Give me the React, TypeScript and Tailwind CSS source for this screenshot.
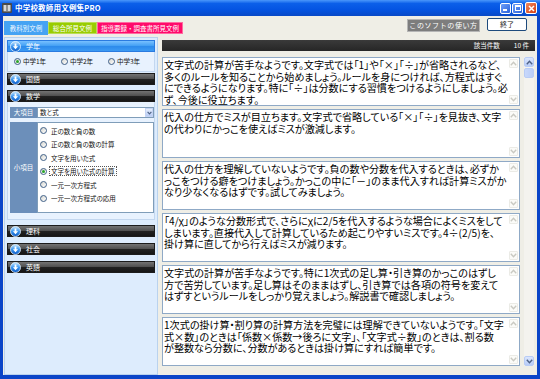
import React from "react";

const boxes: string[][] = [
  [
    "文字式の計算が苦手なようです。文字式では「1」や「×」「÷」が省略されるなど、",
    "多くのルールを知ることから始めましょう。ルールを身につければ、方程式はすぐ",
    "にできるようになります。特に「÷」は分数にする習慣をつけるようにしましょう。必",
    "ず、今後に役立ちます。",
  ],
  [
    "代入の仕方でミスが目立ちます。文字式で省略している「×」「÷」を見抜き、文字",
    "の代わりにかっこを使えばミスが激減します。",
  ],
  [
    "代入の仕方を理解していないようです。負の数や分数を代入するときは、必ずか",
    "っこをつける癖をつけましょう。かっこの中に「－」のまま代入すれば計算ミスがか",
    "なり少なくなるはずです。試してみましょう。",
  ],
  [
    "「4/χ」のような分数形式で、さらにχに2/5を代入するような場合によくミスをして",
    "しまいます。直接代入して計算しているため起こりやすいミスです。4÷(2/5)を、",
    "掛け算に直してから行えばミスが減ります。",
  ],
  [
    "文字式の計算が苦手なようです。特に1次式の足し算・引き算のかっこのはずし",
    "方で苦労しています。足し算はそのままはずし、引き算では各項の符号を変えて",
    "はずすというルールをしっかり覚えましょう。解説書で確認しましょう。",
  ],
  [
    "1次式の掛け算・割り算の計算方法を完璧には理解できていないようです。「文字",
    "式×数」のときは「係数×係数→後ろに文字」、「文字式÷数」のときは、割る数",
    "が整数なら分数に、分数があるときは掛け算にすれば簡単です。",
  ],
];

const subItems = [
  "正の数と負の数",
  "正の数と負の数の計算",
  "文字を用いた式",
  "文字を用いた式の計算",
  "一元一次方程式",
  "一元一次方程式の応用",
];

function Chevron({ up, color }: { up?: boolean; color: string }) {
  return (
    <svg width="7" height="5" viewBox="0 0 7 5">
      <path
        d={up ? "M0.8 4.2L3.5 1.3 6.2 4.2" : "M0.8 0.8L3.5 3.7 6.2 0.8"}
        stroke={color}
        strokeWidth="1.4"
        fill="none"
      />
    </svg>
  );
}

function DownIcon() {
  return (
    <svg width="11" height="11" viewBox="0 0 11 11" className="shrink-0">
      <defs>
        <linearGradient id="hg" x1="0" y1="0" x2="0" y2="1">
          <stop offset="0" stopColor="#c4e6ff" />
          <stop offset="0.5" stopColor="#3a95f0" />
          <stop offset="1" stopColor="#0b58c4" />
        </linearGradient>
      </defs>
      <circle cx="5.5" cy="5.5" r="5" fill="url(#hg)" stroke="#eaf5ff" strokeWidth="0.8" />
      <path d="M4.6 2.5h1.8v2.8h1.7L5.5 8.3 2.9 5.3h1.7z" fill="#fff" />
    </svg>
  );
}

function Header({ label, active }: { label: string; active?: boolean }) {
  return (
    <div
      className={`h-[12px] flex items-center gap-[5px] pl-[2px] border ${
        active
          ? "bg-[linear-gradient(#78c0ff,#43a0f4_48%,#2c8aeb_52%,#3c9af2)] border-[#2a7be0]"
          : "bg-[linear-gradient(#737373,#515151_46%,#222_52%,#161616)] border-[#1c1c1c]"
      }`}
    >
      <DownIcon />
      <span className="text-[7px] leading-none text-white">{label}</span>
    </div>
  );
}

function Radio({ checked }: { checked?: boolean }) {
  return (
    <span className="w-[7px] h-[7px] rounded-full border border-[#3f5f86] bg-[linear-gradient(135deg,#d6d6cf,#ffffff)] flex items-center justify-center shrink-0">
      {checked && <span className="w-[3px] h-[3px] rounded-full bg-[#2aa52a]" />}
    </span>
  );
}

function TitleBar() {
  return (
    <div className="h-[16px] shrink-0 flex items-center pl-[2px] pr-[3px] bg-[linear-gradient(#4a97fb,#0b5fe9_22%,#0454e2_60%,#0849c6)]">
      <svg width="10" height="10" viewBox="0 0 10 10" className="shrink-0">
        <rect x="0" y="0" width="10" height="10" rx="1" fill="#4a4a4a" />
        <rect x="1.5" y="2" width="3" height="6" fill="#d8d8d8" />
        <rect x="5.5" y="2" width="3" height="6" fill="#d8d8d8" />
        <rect x="1.5" y="8.2" width="7" height="0.8" fill="#888" />
      </svg>
      <span className="ml-[3px] text-[7.5px] font-bold leading-none text-white tracking-[0.2px]">
        中学校教師用文例集PRO
      </span>
      <div className="flex-1" />
      <div className="w-[11px] h-[11px] rounded-[2px] border border-white bg-[linear-gradient(135deg,#6ea0f8,#2a62dc)] flex items-end pl-[2px] pb-[2px]">
        <span className="w-[4px] h-[2px] bg-white" />
      </div>
      <div className="ml-[1px] w-[11px] h-[11px] rounded-[2px] border border-white bg-[linear-gradient(135deg,#6ea0f8,#2a62dc)] flex items-center justify-center">
        <span className="w-[6px] h-[6px] border border-white border-t-2" />
      </div>
      <div className="ml-[2px] w-[12px] h-[12px] rounded-[2px] border border-white bg-[linear-gradient(135deg,#f08a60,#d33c10)] flex items-center justify-center">
        <svg width="7" height="7" viewBox="0 0 7 7">
          <path d="M1 1L6 6M6 1L1 6" stroke="#fff" strokeWidth="1.5" />
        </svg>
      </div>
    </div>
  );
}

function Toolbar() {
  return (
    <div className="h-[21px] shrink-0 flex items-start">
      <div className="mt-[5px] ml-[1px] flex items-start">
        <div className="w-[44px] h-[14px] bg-[#45a3f3] flex items-center justify-center text-[6.5px] leading-none text-[#eef8ff]">
          教科別文例
        </div>
        <div className="mt-[1px] w-[49px] h-[12px] bg-[#99cc00] border border-[#b9dd55] flex items-center justify-center text-[6.5px] leading-none text-white">
          総合所見文例
        </div>
        <div className="mt-[1px] w-[86px] h-[12px] bg-[#ff0a6a] border border-[#ff6aa0] flex items-center justify-center text-[6.5px] leading-none text-white">
          指導要録・調査書所見文例
        </div>
      </div>
      <div className="flex-1" />
      <div className="mt-[3px] w-[73px] h-[13px] bg-[#7d7d7d] border border-[#b5b5b5] flex items-center justify-center text-[7px] leading-none text-white tracking-[0.6px]">
        このソフトの使い方
      </div>
      <div className="mt-[2px] ml-[7px] mr-[10px] w-[40px] h-[13px] bg-white rounded-[2px] border border-[#1d4a7c] flex items-center justify-center text-[7px] leading-none text-[#222]">
        終了
      </div>
    </div>
  );
}

function LeftPanel() {
  return (
    <div className="w-[154px] ml-[1px] bg-[#ddecfd] border border-[#b9d2ee] px-[2px] pt-[2px] flex flex-col">
      <Header label="学年" active />
      <div className="h-[20px] flex items-center bg-[#e8f2fe] border-x border-b border-[#c3d7ef]">
        {["中学1年", "中学2年", "中学3年"].map((t, i) => (
          <div key={t} className="w-[47px] pl-[6px] flex items-center gap-[2px]">
            <Radio checked={i === 0} />
            <span className="text-[6.5px] leading-none text-[#111]">{t}</span>
          </div>
        ))}
      </div>
      <div className="mt-[1px]">
        <Header label="国語" />
      </div>
      <div className="mt-[5px]">
        <Header label="数学" />
      </div>
      <div className="bg-[#e8f2fe] border-x border-b border-[#c3d7ef] pl-[2px] pt-[5px] pb-[6px]">
        <div className="h-[11px] flex">
          <div className="w-[27px] bg-[#6c8fba] flex items-center justify-center text-[6.5px] leading-none text-white">
            大項目
          </div>
          <div className="flex-1 bg-white border border-[#7f9db9] flex items-center pl-[2px]">
            <span className="flex-1 text-[6.5px] leading-none text-[#111] [font-feature-settings:'palt']">数と式</span>
            <div className="w-[8px] h-[9px] bg-[linear-gradient(#e6eefc,#b9cdf5)] border border-[#c5d4f4] flex items-center justify-center">
              <svg width="5" height="4" viewBox="0 0 5 4">
                <path d="M0.6 0.8L2.5 2.8 4.4 0.8" stroke="#4d6185" strokeWidth="1.2" fill="none" />
              </svg>
            </div>
          </div>
        </div>
        <div className="mt-[4px] h-[91px] flex">
          <div className="w-[27px] bg-[#6c8fba] flex items-center justify-center text-[6.5px] leading-none text-white">
            小項目
          </div>
          <div className="flex-1 bg-white border border-[#7f9db9] pl-[2px] pt-[1px] flex flex-col">
            {subItems.map((t, i) => (
              <div key={t} className="h-[13.5px] flex items-center gap-[2px]">
                <Radio checked={i === 3} />
                <span
                  className={`text-[6.5px] leading-[8px] px-[1px] text-[#111] [font-feature-settings:'palt'] ${
                    i === 3 ? "border border-dotted border-[#555]" : "border border-transparent"
                  }`}
                >
                  {t}
                </span>
              </div>
            ))}
          </div>
        </div>
      </div>
      <div className="mt-[5px]">
        <Header label="理科" />
      </div>
      <div className="mt-[6px]">
        <Header label="社会" />
      </div>
      <div className="mt-[6px]">
        <Header label="英語" />
      </div>
    </div>
  );
}

function TextBox({ lines }: { lines: string[] }) {
  return (
    <div className="h-[49px] bg-white border border-[#8fa9c6] flex">
      <div className="flex-1 min-w-0 pl-[1px] pt-[1px] overflow-hidden">
        {lines.map((l, i) => (
          <div
            key={i}
            className="h-[11.6px] leading-[11.6px] text-[10.1px] text-black whitespace-nowrap [font-feature-settings:'palt']"
          >
            {l}
          </div>
        ))}
      </div>
      <div className="w-[9px] flex flex-col justify-between py-[1px] mr-[1px]">
        <div className="h-[9px] rounded-[1px] border border-[#ebebe6] bg-[#fbfbf8] flex items-center justify-center">
          <Chevron up color="#c9c9c2" />
        </div>
        <div className="h-[9px] rounded-[1px] border border-[#ebebe6] bg-[#fbfbf8] flex items-center justify-center">
          <Chevron color="#c9c9c2" />
        </div>
      </div>
    </div>
  );
}

function RightPanel() {
  return (
    <div className="flex-1 ml-[3px] flex flex-col pt-[3px]">
      <div className="h-[11px] ml-[1px] mr-[2px] bg-[linear-gradient(#3a3a3a,#262626)] flex items-center justify-end pr-[6px] text-[6.5px] leading-none text-white">
        <span>該当件数</span>
        <span className="ml-[14px]">10 件</span>
      </div>
      <div className="mt-[6px] ml-[1px] flex">
        <div className="w-[358px] flex flex-col gap-[3px]">
          {boxes.map((b, i) => (
            <TextBox key={i} lines={b} />
          ))}
        </div>
        <div className="ml-[4px] w-[10px] bg-[#f4f3ee] flex flex-col">
          <div className="h-[10px] rounded-[2px] border border-[#b8ccf5] bg-[linear-gradient(#dbe6fd,#b6cbf7)] flex items-center justify-center">
            <Chevron up color="#4d6185" />
          </div>
          <div className="mt-[1px] h-[10px] rounded-[2px] border border-[#b8ccf5] bg-[linear-gradient(90deg,#c8d8fb,#b9cdf7)]" />
          <div className="flex-1" />
          <div className="h-[10px] rounded-[2px] border border-[#b8ccf5] bg-[linear-gradient(#dbe6fd,#b6cbf7)] flex items-center justify-center">
            <Chevron color="#4d6185" />
          </div>
        </div>
      </div>
    </div>
  );
}

export default function App() {
  return (
    <div className="w-[540px] h-[379px] flex flex-col overflow-hidden bg-[#0b45c8] font-['Noto_Sans_CJK_JP',sans-serif]">
      <TitleBar />
      <div className="flex-1 min-h-0 mx-[3px] mb-[4px] bg-[#efeee6] flex flex-col">
        <Toolbar />
        <div className="flex-1 min-h-0 flex">
          <LeftPanel />
          <RightPanel />
        </div>
      </div>
    </div>
  );
}
